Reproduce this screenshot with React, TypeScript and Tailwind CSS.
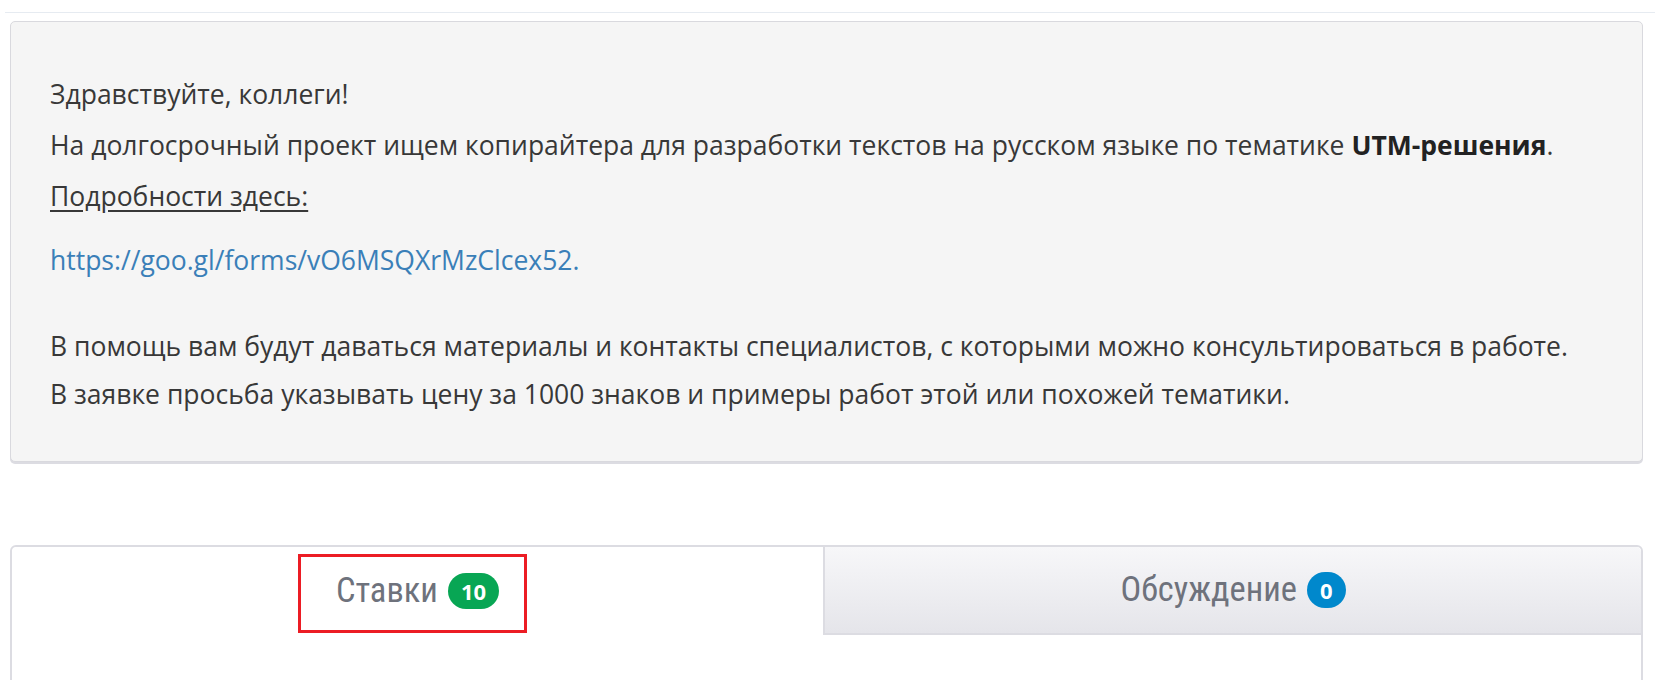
function Badge({ n, className }: { n: number; className: string }) {
  return (
    <span
      className={
        "inline-flex h-[36px] items-center justify-center rounded-full px-[13px] font-['Open_Sans',sans-serif] text-[22px] font-bold leading-none font-stretch-normal text-white " +
        className
      }
    >
      {n}
    </span>
  );
}

export default function App() {
  return (
    <div className="relative h-[680px] w-[1666px] overflow-hidden bg-white font-['Open_Sans',sans-serif]">
      <div className="ml-[5px] mt-[12px] h-px w-[1650px] bg-[#e6ebf1]" />

      {/* Описание проекта */}
      <div className="ml-[10px] mt-[8px] w-[1633px] rounded-[5px] border border-[#d9d9de] bg-[#f5f5f5] pb-[41px] pl-[39px] pt-[47px] text-[26.5px] leading-[51px] text-[#383838] shadow-[0_2px_0_#dcdce2]">
        <div>Здравствуйте, коллеги!</div>
        <div>
          На долгосрочный проект ищем копирайтера для разработки текстов на
          русском языке по тематике <b className="text-[#222]">UTM-решения</b>.
        </div>
        <div className="underline underline-offset-[4px]">Подробности здесь:</div>
        <div className="mt-[13px]">
          <a className="text-[#3a7fb8]">https://goo.gl/forms/vO6MSQXrMzClcex52.</a>
        </div>
        <div className="mt-[35px]">
          В помощь вам будут даваться материалы и контакты специалистов, с
          которыми можно консультироваться в работе.
        </div>
        <div className="-mt-[3px]">
          В заявке просьба указывать цену за 1000 знаков и примеры работ этой
          или похожей тематики.
        </div>
      </div>

      {/* Вкладки */}
      <div className="ml-[10px] mt-[83px] h-[200px] w-[1633px] rounded-t-[6px] border-2 border-[#dcdce2]">
        <div className="flex h-[88px] font-['Roboto',sans-serif] text-[34.5px] font-stretch-condensed text-[#6e727c]">
          <div className="flex flex-1 items-center justify-center gap-[10px] rounded-tl-[5px] bg-white">
            <span>Ставки</span>
            <Badge n={10} className="bg-[#08a654]" />
          </div>
          <div className="flex w-[818px] items-center justify-center gap-[10px] rounded-tr-[5px] border-b-2 border-l-2 border-[#dcdce2] bg-gradient-to-b from-[#f7f7f9] to-[#e5e5ea]">
            <span>Обсуждение</span>
            <Badge n={0} className="bg-[#0088cc]" />
          </div>
        </div>
      </div>

      {/* Выделение */}
      <div className="absolute left-[298px] top-[554px] h-[79px] w-[229px] border-[3px] border-[#ec1c24]" />
    </div>
  );
}
